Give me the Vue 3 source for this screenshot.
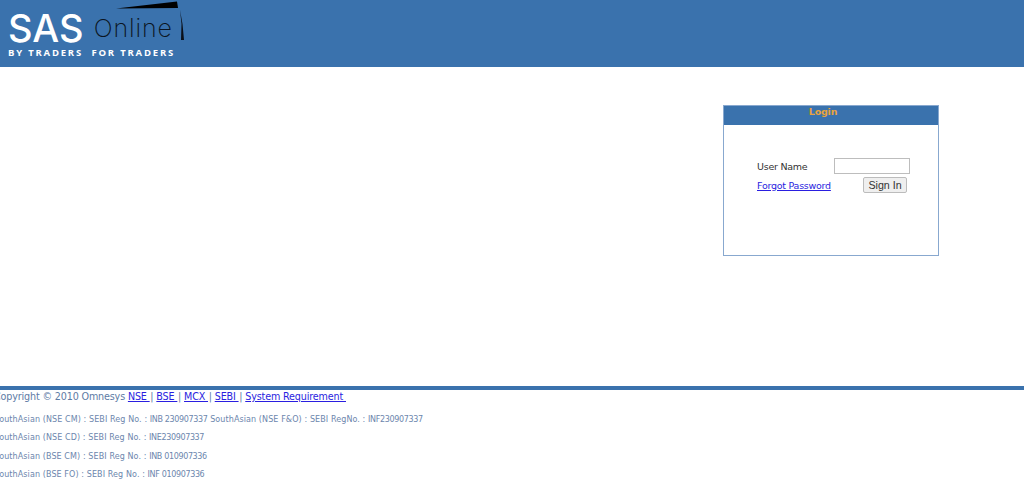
<script setup>
const regs = [
  [['SouthAsian (NSE CM) : SEBI Reg No. : ', 'INB 230907337'], [' SouthAsian (NSE F&O) : SEBI RegNo. : ', 'INF230907337']],
  [['SouthAsian (NSE CD) : SEBI Reg No. : ', 'INE230907337']],
  [['SouthAsian (BSE CM) : SEBI Reg No. : ', 'INB 010907336']],
  [['SouthAsian (BSE FO) : SEBI Reg No. : ', 'INF 010907336']]
]
const links = ['NSE', 'BSE', 'MCX', 'SEBI']
</script>

<template>
  <div class="page">
    <header class="top">
      <div class="logo">
        <svg class="swoosh" width="186" height="45" viewBox="0 0 186 45">
          <path d="M116 8.500 L177 1.500 L178 8 Z" fill="#000" />
          <path d="M180 10 L182.500 24 L184 40 L181 40 L181.500 24 Z" fill="#0a0f18" />
        </svg>
        <div class="logo-row"><span class="sas">SAS</span><span class="online">Online</span></div>
        <div class="tag">BY TRADERS&nbsp;&nbsp;FOR TRADERS</div>
      </div>
    </header>
    <main class="main">
      <section class="login">
        <h2 class="login-head">Login</h2>
        <div class="login-body">
          <div class="row">
            <label class="lbl">User Name</label>
            <input class="inp" type="text" />
          </div>
          <div class="row row2">
            <a class="forgot" href="#">Forgot Password</a>
            <button class="btn" type="button">Sign In</button>
          </div>
        </div>
      </section>
    </main>
    <footer class="foot">
      <div class="copy">
        Copyright © 2010 Omnesys
        <template v-for="l in links" :key="l"><a href="#">{{ l }}&nbsp;</a>| </template><a href="#">System Requirement&nbsp;</a>
      </div>
      <p v-for="(r, i) in regs" :key="i" class="reg">
        <template v-for="p in r" :key="p[1]">{{ p[0] }}<span class="num">{{ p[1] }}</span></template>
      </p>
    </footer>
  </div>
</template>

<style>
html, body { margin: 0; background: #fff; overflow: hidden; }
</style>

<style scoped>
.page {
  height: 482px;
  display: flex;
  flex-direction: column;
  font-family: "DejaVu Sans", Verdana, sans-serif;
  overflow: hidden;
}
.top {
  height: 67px;
  flex: none;
  background: #3a72ad;
}
.logo {
  position: relative;
  width: 186px;
  height: 67px;
  padding: 10px 0 0 8px;
  box-sizing: border-box;
}
.swoosh { position: absolute; left: 0; top: 0; }
.logo-row { display: flex; align-items: flex-start; height: 36px; line-height: 36px; }
.sas {
  font-family: Inter, sans-serif;
  font-weight: 500;
  font-size: 38px;
  color: #fff;
}
.online {
  font-family: Inter, sans-serif;
  font-weight: 200;
  font-size: 25px;
  line-height: 24px;
  letter-spacing: 0.9px;
  color: #0b1522;
  margin: 6px 0 0 10px;
}
.tag {
  margin-top: 1px;
  font-family: "Open Sans", sans-serif;
  font-weight: 700;
  font-size: 9.500px;
  line-height: 12px;
  letter-spacing: 1.800px;
  color: #fff;
  white-space: nowrap;
}
.main {
  height: 319px;
  flex: none;
  box-sizing: border-box;
  padding: 38px 85px 0 0;
  display: flex;
  justify-content: flex-end;
  align-items: flex-start;
}
.login {
  width: 216px;
  height: 151px;
  box-sizing: border-box;
  border: 1px solid #88a8cf;
}
.login-head {
  margin: 0;
  height: 19px;
  background: #3a72ad;
  color: #e8a33d;
  font-size: 9.500px;
  letter-spacing: -0.200px;
  font-weight: 700;
  line-height: 12px;
  text-align: center;
  padding-right: 16px;
}
.login-body { padding: 33px 28px 0 33px; }
.row {
  display: flex;
  align-items: center;
  justify-content: space-between;
  font-size: 9.500px;
  letter-spacing: -0.250px;
}
.row2 { margin-top: 3px; padding-right: 3px; }
.lbl { color: #333; }
.inp {
  width: 76px;
  height: 16px;
  box-sizing: border-box;
  border: 1px solid #bdbdbd;
  padding: 0;
  background: #fff;
  outline: none;
}
.forgot { color: #2a1ee0; }
.btn {
  width: 44px;
  height: 16px;
  padding: 0;
  box-sizing: border-box;
  border: 1px solid #bcbcbc;
  border-radius: 2px;
  background: #efefef;
  color: #333;
  font-family: "Liberation Sans", Arial, sans-serif;
  font-size: 10.670px;
  letter-spacing: 0;
  line-height: 14px;
}
.foot {
  border-top: 4px solid #3a72ad;
  margin-left: -6px;
  color: #6c86ad;
}
.copy {
  font-size: 9.600px;
  letter-spacing: -0.150px;
  line-height: 12px;
  margin-top: 1px;
  white-space: nowrap;
  color: #5d7ba5;
}
.copy a { color: #2a1ee0; margin-right: 0.700px; }
.reg {
  margin: 0;
  font-size: 8px;
  line-height: 10px;
  letter-spacing: 0.100px;
  padding-top: 8.300px;
  white-space: nowrap;
}
.copy + .reg { padding-top: 12px; }
.num { letter-spacing: -0.350px; }
</style>
